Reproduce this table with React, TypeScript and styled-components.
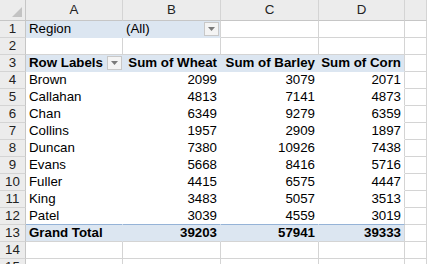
import styled, { createGlobalStyle } from "styled-components"

const GlobalStyle = createGlobalStyle`
  html, body {
    margin: 0;
    padding: 0;
    background: #ffffff;
    overflow: hidden;
  }
  body {
    font-family: "Liberation Sans", Arial, sans-serif;
    font-size: 13.3px;
    color: #000000;
  }
`

const GRID = "#d4d4d4"
const HEAD_LINE = "#c6c6c6"
const PIVOT_BLUE = "#dce6f1"
const PIVOT_LINE = "#95b3d7"

export const Sheet = styled.div`
  width: 427px;
  height: 264px;
  display: grid;
  grid-template-columns: 26px 97px 98px 98px 86px 1fr;
  grid-template-rows: 21px;
  grid-auto-rows: 17px;
  overflow: hidden;
`

export const Corner = styled.div`
  background: #ececec;
  border-right: 1px solid ${HEAD_LINE};
  border-bottom: 1px solid ${HEAD_LINE};
  display: flex;
  align-items: flex-end;
  justify-content: flex-end;
  padding: 0 3px 3px 0;
`

export const ColHead = styled.div`
  background: #ececec;
  border-right: 1px solid ${GRID};
  border-bottom: 1px solid ${HEAD_LINE};
  display: flex;
  align-items: center;
  justify-content: center;
  color: #222222;
  line-height: 1;
`

export const RowHead = styled.div`
  background: #ececec;
  border-right: 1px solid ${HEAD_LINE};
  border-bottom: 1px solid ${GRID};
  display: flex;
  align-items: center;
  justify-content: center;
  color: #222222;
  line-height: 1;
`

type CellProps = {
  $align?: "left" | "right"
  $bold?: boolean
  $fill?: boolean
  $noRight?: boolean
  $noBottom?: boolean
  $blueBottom?: boolean
}

// one sheet cell; pivot cells hide their gridlines by painting them in the fill colour
export const Cell = styled.div<CellProps>`
  display: flex;
  align-items: center;
  justify-content: ${p => (p.$align === "right" ? "flex-end" : "flex-start")};
  gap: 4px;
  padding: 0 3px;
  white-space: nowrap;
  line-height: 1;
  font-weight: ${p => (p.$bold ? 700 : 400)};
  background: ${p => (p.$fill ? PIVOT_BLUE : "#ffffff")};
  border-right: 1px solid
    ${p => (p.$noRight ? (p.$fill ? PIVOT_BLUE : "#ffffff") : GRID)};
  border-bottom: 1px solid
    ${p =>
      p.$blueBottom
        ? PIVOT_LINE
        : p.$noBottom
          ? p.$fill
            ? PIVOT_BLUE
            : "#ffffff"
          : GRID};
  position: relative;
  z-index: ${p => (p.$align === "right" ? 1 : 0)};
`

export const CellText = styled.span`
  flex: 1;
`

export const FilterButton = styled.div`
  width: 15px;
  height: 14px;
  box-sizing: border-box;
  border: 1px solid #c8c8c8;
  background: #f4f4f4;
  display: flex;
  align-items: center;
  justify-content: center;
  margin-right: -2px;
  flex-shrink: 0;
`

const Caret = () => (
  <svg width="7" height="4" viewBox="0 0 7 4">
    <polygon points="0,0 7,0 3.5,4" fill="#7a7a7a" />
  </svg>
)

const CornerMark = () => (
  <svg width="10" height="10" viewBox="0 0 10 10">
    <polygon points="10,0 10,10 0,10" fill="#c3c3c3" />
  </svg>
)

const rows = [
  ["Brown", 2099, 3079, 2071],
  ["Callahan", 4813, 7141, 4873],
  ["Chan", 6349, 9279, 6359],
  ["Collins", 1957, 2909, 1897],
  ["Duncan", 7380, 10926, 7438],
  ["Evans", 5668, 8416, 5716],
  ["Fuller", 4415, 6575, 4447],
  ["King", 3483, 5057, 3513],
  ["Patel", 3039, 4559, 3019],
] as const

const totals = [39203, 57941, 39333]

export default function App() {
  return (
    <>
      <GlobalStyle />
      <Sheet>
        <Corner>
          <CornerMark />
        </Corner>
        {["A", "B", "C", "D", ""].map((c, i) => (
          <ColHead key={i}>{c}</ColHead>
        ))}

        {/* row 1: report filter */}
        <RowHead>1</RowHead>
        <Cell $fill $noRight $noBottom>Region</Cell>
        <Cell $fill $noBottom>
          <CellText>(All)</CellText>
          <FilterButton>
            <Caret />
          </FilterButton>
        </Cell>
        <Cell />
        <Cell />
        <Cell />

        {/* row 2 */}
        <RowHead>2</RowHead>
        <Cell />
        <Cell />
        <Cell />
        <Cell />
        <Cell />

        {/* row 3: pivot header */}
        <RowHead>3</RowHead>
        <Cell $fill $bold $noRight $noBottom>
          <CellText>Row Labels</CellText>
          <FilterButton>
            <Caret />
          </FilterButton>
        </Cell>
        <Cell $fill $bold $align="right" $noRight $noBottom>Sum of Wheat</Cell>
        <Cell $fill $bold $align="right" $noRight $noBottom>Sum of Barley</Cell>
        <Cell $fill $bold $align="right" $noBottom>Sum of Corn</Cell>
        <Cell />

        {rows.map(([name, w, b, c], i) => {
          const last = i === rows.length - 1
          return [
            <RowHead key={`h${i}`}>{i + 4}</RowHead>,
            <Cell key={`a${i}`} $noRight $noBottom={!last} $blueBottom={last}>{name}</Cell>,
            <Cell key={`b${i}`} $align="right" $noRight $noBottom={!last} $blueBottom={last}>{w}</Cell>,
            <Cell key={`c${i}`} $align="right" $noRight $noBottom={!last} $blueBottom={last}>{b}</Cell>,
            <Cell key={`d${i}`} $align="right" $noBottom={!last} $blueBottom={last}>{c}</Cell>,
            <Cell key={`e${i}`} />,
          ]
        })}

        {/* row 13: grand total */}
        <RowHead>13</RowHead>
        <Cell $fill $bold $noRight>Grand Total</Cell>
        {totals.map((t, i) => (
          <Cell key={i} $fill $bold $align="right" $noRight={i < 2}>{t}</Cell>
        ))}
        <Cell />

        {[14, 15].map(n => [
          <RowHead key={`h${n}`}>{n}</RowHead>,
          <Cell key={`a${n}`} />,
          <Cell key={`b${n}`} />,
          <Cell key={`c${n}`} />,
          <Cell key={`d${n}`} />,
          <Cell key={`e${n}`} />,
        ])}
      </Sheet>
    </>
  )
}
